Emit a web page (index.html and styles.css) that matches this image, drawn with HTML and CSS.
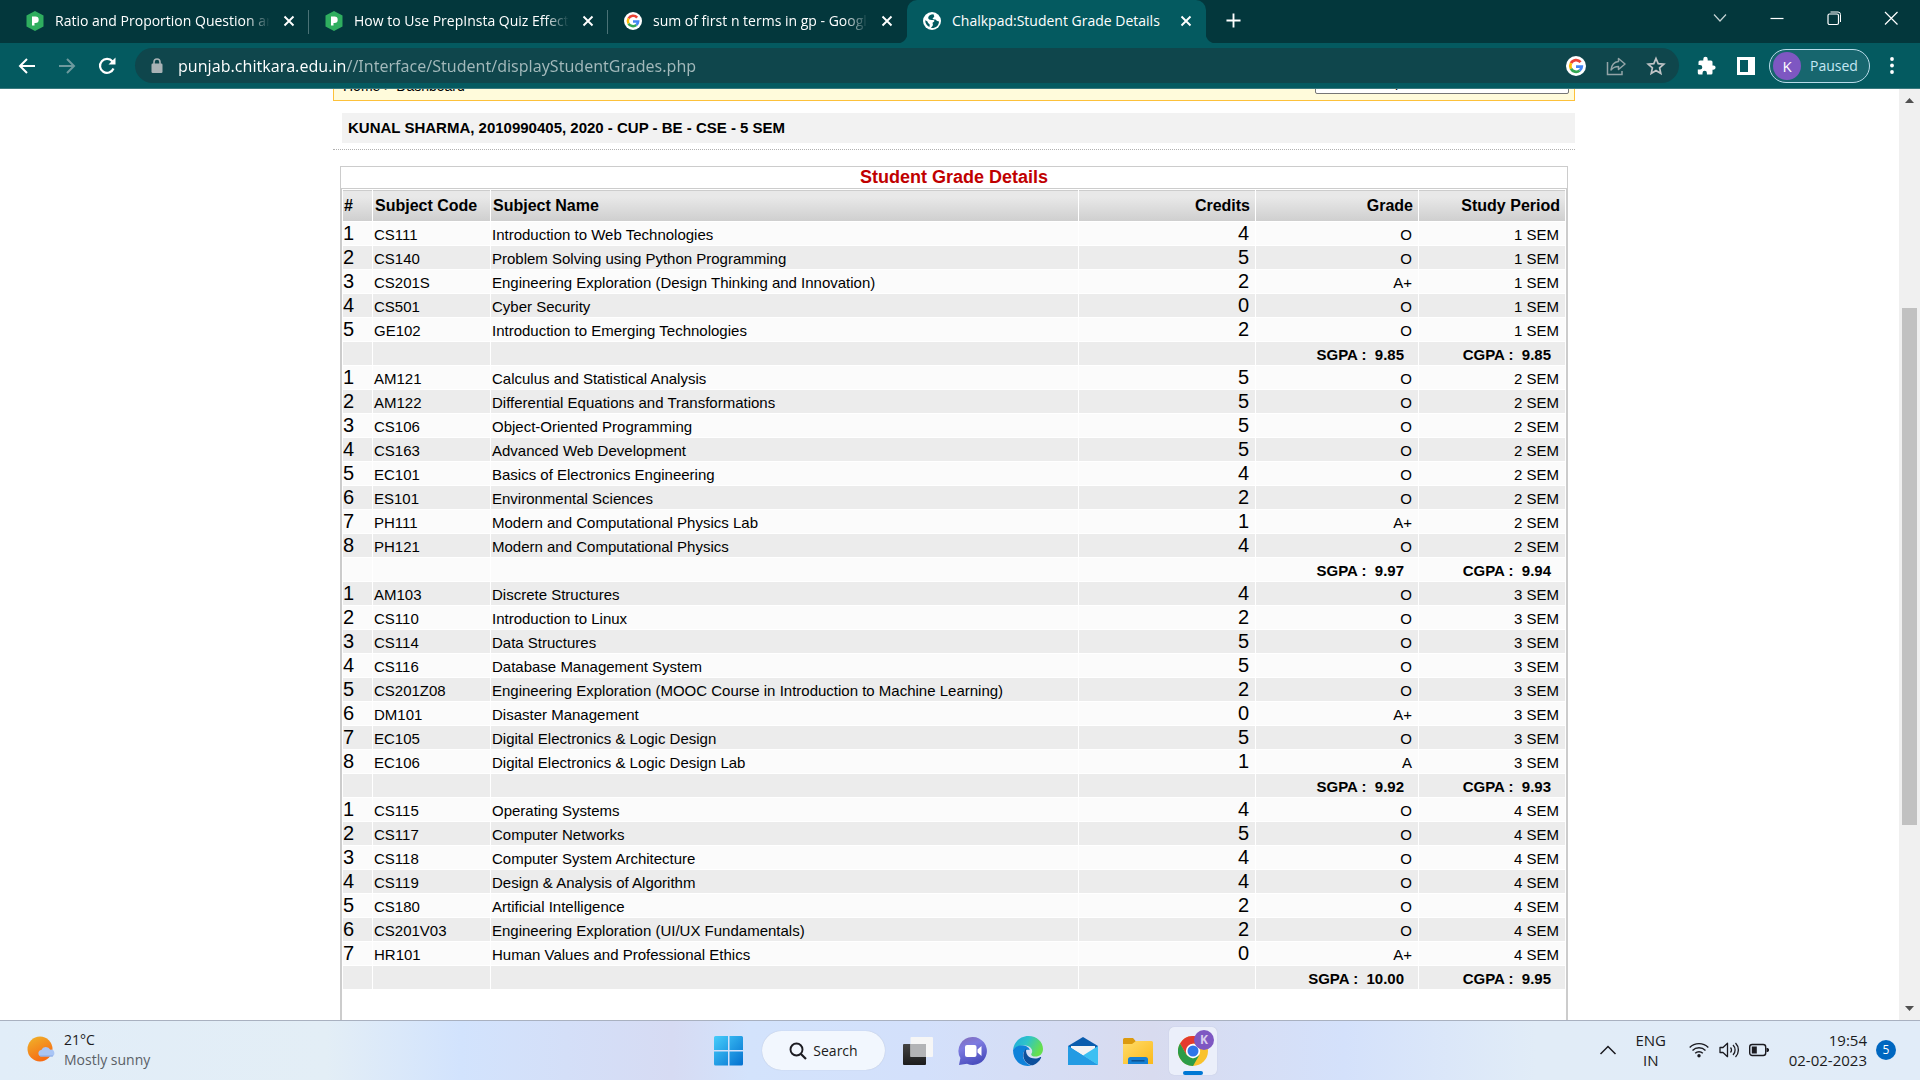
FILE: index.html
```html
<!DOCTYPE html>
<html lang="en">
<head>
<meta charset="utf-8">
<title>Chalkpad:Student Grade Details</title>
<link rel="stylesheet" href="styles.css">
</head>
<body>
<svg class="defs" aria-hidden="true">
  <defs>
    <symbol id="prep" viewBox="0 0 18 20"><path d="M9 0l8.500 4.600v10.800L9 20 .5 15.400V4.600z" fill="#2fae5f"/><path d="M6 5.500h3.500a3.200 3.200 0 0 1 0 6.400H8.500V14.500H6z" fill="#fff"/></symbol>
    <symbol id="goog" viewBox="0 0 20 20"><circle cx="10" cy="10" r="10" fill="#fff"/><g fill="none" stroke-width="2.800"><path d="M14.600 6.200A5.800 5.800 0 0 0 5 7.200" stroke="#ea4335"/><path d="M5 7.200a5.900 5.900 0 0 0 0 5.600" stroke="#fbbc05"/><path d="M5 12.800a5.800 5.800 0 0 0 8.700 1.700" stroke="#34a853"/><path d="M13.700 14.500a5.800 5.800 0 0 0 2-3.900H10" stroke="#4285f4"/></g></symbol>
    <symbol id="x" viewBox="0 0 12 12"><path d="M1.500 1.500l9 9m0-9l-9 9" stroke="#fff" stroke-width="1.900"/></symbol>
  </defs>
</svg>

<header class="browser">
  <nav class="tabs" aria-label="Tabs">
    <div class="tab"><svg class="fav"><use href="#prep"/></svg><a href="#" class="tab-title">Ratio and Proportion Question and Answers</a><button class="close" aria-label="Close tab"><svg><use href="#x"/></svg></button></div>
    <div class="tab"><svg class="fav"><use href="#prep"/></svg><a href="#" class="tab-title">How to Use PrepInsta Quiz Effectively</a><button class="close" aria-label="Close tab"><svg><use href="#x"/></svg></button></div>
    <div class="tab"><svg class="fav"><use href="#goog"/></svg><a href="#" class="tab-title">sum of first n terms in gp - Google Search</a><button class="close" aria-label="Close tab"><svg><use href="#x"/></svg></button></div>
    <div class="tab active"><svg class="fav" viewBox="0 0 18 18"><circle cx="9" cy="9" r="9" fill="#fff"/><path d="M10.500 2.200c-3 .2-5.300 1.600-5.300 3.600 0 1.700 1.500 2.200 3.300 2.200h1.800c1 0 1.400.8.8 1.500-.5.700-1.500.6-1.500 1.500 0 1 .6 1.300.2 2.300-.3.900-1.200 1.700-1.800 2.700 4.500.6 8-2.600 8-6.500l-1.700-.5c-.8-.2-1-1.200-2-1.500-1-.2-2.300.2-2.600-.7-.3-1 1.200-1 1.500-2 .2-.9-.5-1.600-.7-2.600zM2.200 8.300c0 3 1.600 5.500 4.200 6.600l.3-1.900c.1-.8-.6-1.100-1.300-1.700-.8-.7-.5-1.400-1.200-2.100z" fill="#045a60"/></svg><a href="#" class="tab-title">Chalkpad:Student Grade Details</a><button class="close" aria-label="Close tab"><svg><use href="#x"/></svg></button></div>
    <button class="new-tab" aria-label="New tab"><svg viewBox="0 0 16 16"><path d="M8 .5v15M.5 8h15" stroke="#fff" stroke-width="2"/></svg></button>
    <div class="window-controls">
      <button aria-label="Search tabs"><svg viewBox="0 0 16 16"><path d="M2 4.500l6 6.500 6-6.500" fill="none" stroke="#c5d3d4" stroke-width="1.200"/></svg></button>
      <button aria-label="Minimize"><svg viewBox="0 0 16 16"><path d="M1.500 8.500h13" stroke="#fff" stroke-width="1.200"/></svg></button>
      <button aria-label="Restore"><svg viewBox="0 0 16 16"><rect x="2" y="4" width="10.500" height="10.500" rx="1.500" fill="none" stroke="#fff" stroke-width="1.200"/><path d="M4.500 2h7.500a2.500 2.500 0 0 1 2.500 2.500V12" fill="none" stroke="#fff"/></svg></button>
      <button aria-label="Close"><svg viewBox="0 0 16 16"><path d="M2 2l12.500 12.500m0-12.500L2 14.500" stroke="#fff" stroke-width="1.200"/></svg></button>
    </div>
  </nav>
  <div class="toolbar">
    <div class="nav-buttons">
      <button aria-label="Back"><svg viewBox="0 0 20 20"><path d="M18 10H3m7-7l-7 7 7 7" fill="none" stroke="#fff" stroke-width="2"/></svg></button>
      <button aria-label="Forward"><svg viewBox="0 0 20 20"><path d="M2 10h15m-7-7l7 7-7 7" fill="none" stroke="#6d9a9e" stroke-width="2"/></svg></button>
      <button aria-label="Reload"><svg viewBox="0 0 20 20"><path d="M16.500 12.500A7 7 0 1 1 15.500 5.500" fill="none" stroke="#fff" stroke-width="2.200"/><path d="M18.500 1.500v7h-7z" fill="#fff"/></svg></button>
    </div>
    <div class="omnibox">
      <svg class="lock" viewBox="0 0 12 16"><rect y="5.500" x=".5" width="11" height="9.500" rx="1.200" fill="#a9b3b6"/><path d="M3 6V4a3 3 0 0 1 6 0v2" fill="none" stroke="#a9b3b6" stroke-width="1.600"/></svg>
      <input class="url" type="text" aria-label="Address" value="punjab.chitkara.edu.in//Interface/Student/displayStudentGrades.php" spellcheck="false">
      <button aria-label="Google"><svg viewBox="0 0 20 20"><use href="#goog"/></svg></button>
      <button aria-label="Share"><svg viewBox="0 0 20 20"><path d="M1.500 6v12.500H16V15" fill="none" stroke="#93a4a7" stroke-width="1.500"/><path d="M12.500 2.500L19 8l-6.500 5.500V10.500C9.500 10.500 7 11.500 5 14c.5-4.500 3-8 7.500-8.500z" fill="none" stroke="#93a4a7" stroke-width="1.500" stroke-linejoin="round"/></svg></button>
      <button aria-label="Bookmark"><svg viewBox="0 0 20 20"><path d="M10 2.500l2.200 5.200 5.600.5-4.200 3.700 1.200 5.500L10 14.500l-4.800 2.900 1.200-5.500L2.200 8.200l5.600-.5z" fill="none" stroke="#c0c4c6" stroke-width="1.700"/></svg></button>
    </div>
    <div class="actions">
      <button aria-label="Extensions"><svg viewBox="0 0 20 20"><path d="M16.500 9.500V6a1.500 1.500 0 0 0-1.500-1.500h-3.300V3a2.200 2.200 0 0 0-4.400 0v1.500H4A1.500 1.500 0 0 0 2.500 6v3H4a2.300 2.300 0 0 1 0 4.600H1.800V17A1.500 1.500 0 0 0 3.300 18.500h3.200V17a2.200 2.200 0 0 1 4.400 0v1.500H15a1.500 1.500 0 0 0 1.500-1.500v-3.300h1a2.100 2.100 0 0 0 0-4.200z" fill="#fff"/></svg></button>
      <button aria-label="Side panel"><svg viewBox="0 0 20 20"><path d="M1 1h18v18H1zm3 3v12h8V4z" fill="#fff" fill-rule="evenodd"/></svg></button>
      <button class="profile"><span class="avatar">K</span>Paused</button>
      <button class="menu" aria-label="Menu"><svg viewBox="0 0 20 20"><circle cx="10" cy="3" r="1.900" fill="#fff"/><circle cx="10" cy="9.500" r="1.900" fill="#fff"/><circle cx="10" cy="16" r="1.900" fill="#fff"/></svg></button>
    </div>
  </div>
</header>

<div class="viewport">
<main class="page">
  <div class="crumbs">
    <span class="trail"><a href="#">Home</a> &gt; <a href="#">Dashboard</a></span>
    <select aria-label="Group"><option>Select Group</option></select>
  </div>
  <div class="student"><h1>KUNAL SHARMA, 2010990405, 2020 - CUP - BE - CSE - 5 SEM</h1></div>
  <section class="panel">
    <h2>Student Grade Details</h2>
    <div class="panel-body">
    <table class="grades">
      <colgroup><col class="c-num"><col class="c-code"><col class="c-name"><col class="c-credits"><col class="c-grade"><col class="c-period"></colgroup>
      <thead><tr><th>#</th><th>Subject Code</th><th>Subject Name</th><th>Credits</th><th>Grade</th><th>Study Period</th></tr></thead>
      <tbody>
        <tr><td>1</td><td>CS111</td><td>Introduction to Web Technologies</td><td>4</td><td>O</td><td>1 SEM</td></tr>
        <tr><td>2</td><td>CS140</td><td>Problem Solving using Python Programming</td><td>5</td><td>O</td><td>1 SEM</td></tr>
        <tr><td>3</td><td>CS201S</td><td>Engineering Exploration (Design Thinking and Innovation)</td><td>2</td><td>A+</td><td>1 SEM</td></tr>
        <tr><td>4</td><td>CS501</td><td>Cyber Security</td><td>0</td><td>O</td><td>1 SEM</td></tr>
        <tr><td>5</td><td>GE102</td><td>Introduction to Emerging Technologies</td><td>2</td><td>O</td><td>1 SEM</td></tr>
        <tr class="total"><td></td><td></td><td></td><td></td><td>SGPA : &nbsp;9.85</td><td>CGPA : &nbsp;9.85</td></tr>
        <tr><td>1</td><td>AM121</td><td>Calculus and Statistical Analysis</td><td>5</td><td>O</td><td>2 SEM</td></tr>
        <tr><td>2</td><td>AM122</td><td>Differential Equations and Transformations</td><td>5</td><td>O</td><td>2 SEM</td></tr>
        <tr><td>3</td><td>CS106</td><td>Object-Oriented Programming</td><td>5</td><td>O</td><td>2 SEM</td></tr>
        <tr><td>4</td><td>CS163</td><td>Advanced Web Development</td><td>5</td><td>O</td><td>2 SEM</td></tr>
        <tr><td>5</td><td>EC101</td><td>Basics of Electronics Engineering</td><td>4</td><td>O</td><td>2 SEM</td></tr>
        <tr><td>6</td><td>ES101</td><td>Environmental Sciences</td><td>2</td><td>O</td><td>2 SEM</td></tr>
        <tr><td>7</td><td>PH111</td><td>Modern and Computational Physics Lab</td><td>1</td><td>A+</td><td>2 SEM</td></tr>
        <tr><td>8</td><td>PH121</td><td>Modern and Computational Physics</td><td>4</td><td>O</td><td>2 SEM</td></tr>
        <tr class="total"><td></td><td></td><td></td><td></td><td>SGPA : &nbsp;9.97</td><td>CGPA : &nbsp;9.94</td></tr>
        <tr><td>1</td><td>AM103</td><td>Discrete Structures</td><td>4</td><td>O</td><td>3 SEM</td></tr>
        <tr><td>2</td><td>CS110</td><td>Introduction to Linux</td><td>2</td><td>O</td><td>3 SEM</td></tr>
        <tr><td>3</td><td>CS114</td><td>Data Structures</td><td>5</td><td>O</td><td>3 SEM</td></tr>
        <tr><td>4</td><td>CS116</td><td>Database Management System</td><td>5</td><td>O</td><td>3 SEM</td></tr>
        <tr><td>5</td><td>CS201Z08</td><td>Engineering Exploration (MOOC Course in Introduction to Machine Learning)</td><td>2</td><td>O</td><td>3 SEM</td></tr>
        <tr><td>6</td><td>DM101</td><td>Disaster Management</td><td>0</td><td>A+</td><td>3 SEM</td></tr>
        <tr><td>7</td><td>EC105</td><td>Digital Electronics &amp; Logic Design</td><td>5</td><td>O</td><td>3 SEM</td></tr>
        <tr><td>8</td><td>EC106</td><td>Digital Electronics &amp; Logic Design Lab</td><td>1</td><td>A</td><td>3 SEM</td></tr>
        <tr class="total"><td></td><td></td><td></td><td></td><td>SGPA : &nbsp;9.92</td><td>CGPA : &nbsp;9.93</td></tr>
        <tr><td>1</td><td>CS115</td><td>Operating Systems</td><td>4</td><td>O</td><td>4 SEM</td></tr>
        <tr><td>2</td><td>CS117</td><td>Computer Networks</td><td>5</td><td>O</td><td>4 SEM</td></tr>
        <tr><td>3</td><td>CS118</td><td>Computer System Architecture</td><td>4</td><td>O</td><td>4 SEM</td></tr>
        <tr><td>4</td><td>CS119</td><td>Design &amp; Analysis of Algorithm</td><td>4</td><td>O</td><td>4 SEM</td></tr>
        <tr><td>5</td><td>CS180</td><td>Artificial Intelligence</td><td>2</td><td>O</td><td>4 SEM</td></tr>
        <tr><td>6</td><td>CS201V03</td><td>Engineering Exploration (UI/UX Fundamentals)</td><td>2</td><td>O</td><td>4 SEM</td></tr>
        <tr><td>7</td><td>HR101</td><td>Human Values and Professional Ethics</td><td>0</td><td>A+</td><td>4 SEM</td></tr>
        <tr class="total"><td></td><td></td><td></td><td></td><td>SGPA : &nbsp;10.00</td><td>CGPA : &nbsp;9.95</td></tr>
      </tbody>
    </table>
    </div>
  </section>
</main>
<div class="scrollbar" aria-hidden="true">
  <svg viewBox="0 0 9 5"><path d="M4.500 0L9 5H0z" fill="#505050"/></svg>
  <div class="track"><div class="thumb"></div></div>
  <svg viewBox="0 0 9 5"><path d="M0 0h9L4.500 5z" fill="#505050"/></svg>
</div>
</div>

<footer class="taskbar">
  <button class="weather">
    <svg viewBox="0 0 28 28"><defs><linearGradient id="sun" x1="0" y1="0" x2=".5" y2="1"><stop offset="0" stop-color="#efb52b"/><stop offset="1" stop-color="#f76b14"/></linearGradient></defs><circle cx="13" cy="13" r="12.500" fill="url(#sun)"/><path d="M14 20.500a3.300 3.300 0 0 1 .3-6.500 5 5 0 0 1 9-.3A3.400 3.400 0 0 1 24.500 20.500z" fill="#a9c5f5"/><path d="M13 20h13" stroke="#88a9e6"/></svg>
    <span><b>21°C</b><i>Mostly sunny</i></span>
  </button>
  <nav class="apps" aria-label="Taskbar">
    <button aria-label="Start"><svg viewBox="0 0 30 30"><defs><linearGradient id="win" x1="0" y1="0" x2="1" y2="1"><stop offset="0" stop-color="#46cdfb"/><stop offset="1" stop-color="#0370cf"/></linearGradient></defs><path d="M1.500 0H14v14H0V1.500A1.500 1.500 0 0 1 1.500 0zM15.500 0h12A1.500 1.500 0 0 1 29 1.500V14H15.500zM0 15.500h14v14H1.500A1.500 1.500 0 0 1 0 28zM15.500 15.500H29V28a1.500 1.500 0 0 1-1.500 1.500h-12z" fill="url(#win)"/></svg></button>
    <button class="search"><svg viewBox="0 0 18 18"><circle cx="7.500" cy="7.500" r="6" fill="none" stroke="#1c1c22" stroke-width="1.900"/><path d="M12 12l5 5" stroke="#1c1c22" stroke-width="2.200"/></svg>Search</button>
    <button aria-label="Task view"><svg viewBox="0 0 30 30"><defs><linearGradient id="tv" x1="0" y1="0" x2="0" y2="1"><stop offset="0" stop-color="#444"/><stop offset="1" stop-color="#1c1c1c"/></linearGradient></defs><rect y="8" width="23" height="21" rx="1" fill="url(#tv)"/><rect x="7.500" y="1" width="22.500" height="20" rx="1" fill="#f6f6f6"/><path d="M7.500 8H23v13H7.500z" fill="#b3b4b6"/></svg></button>
    <button aria-label="Chat"><svg viewBox="0 0 30 30"><defs><linearGradient id="chat" x1="0" y1="0" x2=".4" y2="1"><stop offset="0" stop-color="#846bb5"/><stop offset=".4" stop-color="#7d7be0"/><stop offset="1" stop-color="#4c4fbf"/></linearGradient></defs><path d="M15 1a14 14 0 1 1-6 26.700L1 29l1.400-7A14 14 0 0 1 15 1z" fill="url(#chat)"/><rect x="7" y="9" width="11.500" height="12" rx="2" fill="#fff"/><path d="M19.500 13.500L23.500 10v10l-4-3.500z" fill="#fff"/></svg></button>
    <button aria-label="Edge"><svg viewBox="0 0 30 30"><defs><linearGradient id="edge" x1="0" y1="0" x2="1" y2=".4"><stop offset="0" stop-color="#1fa8e0"/><stop offset=".5" stop-color="#2fc4c8"/><stop offset="1" stop-color="#66df4e"/></linearGradient></defs><path d="M0 14C1 5 8 0 15.500 0 24 0 30 6 30 13c0 5-3.500 7.500-7.500 7.500-3.500 0-5-1.500-4-3 2-3-.5-7.500-6-8C7 9 2 11 0 14z" fill="url(#edge)"/><path d="M0 14c2-3.500 6-5 10-4.500 4 .4 6.500 2.500 6.700 4.500C10 12 7.500 21 13 26.500 14.500 28 17 29.500 19 29.500 8 32 0 24.500 0 14z" fill="#0f82da"/><path d="M13.500 12.500c-5 4-4 12 2 15.500 2 1.200 3.500 1.500 5 1 3.500-1.500 6-4 7.500-7 .5-1-.3-1.300-1-.8-4 2.500-10 1.300-12.500-2-1.500-2.200-1.800-4.700-1-6.700z" fill="#0c4f9c"/></svg></button>
    <button aria-label="Mail"><svg viewBox="0 0 30 30"><path d="M0 10L15 1l15 9v6H0z" fill="#0a5cad"/><path d="M3 10h24v10H3z" fill="#f3f3f5"/><path d="M0 10l30 19H1.500A1.500 1.500 0 0 1 0 27.500z" fill="#1c92e0"/><path d="M30 10L15 19.500 30 29z" fill="#3cc0f2"/><path d="M0 10l15 9.500L30 29H0z" fill="#239be3"/></svg></button>
    <button aria-label="File Explorer"><svg viewBox="0 0 30 30"><defs><linearGradient id="fold" x1="0" y1="0" x2="1" y2="1"><stop offset="0" stop-color="#ffdc6a"/><stop offset="1" stop-color="#fbb91a"/></linearGradient></defs><path d="M0 3.500A1.500 1.500 0 0 1 1.500 2H10l3 3.500L10 9H0z" fill="#dc9a0e"/><path d="M0 8h9l4-3h15.500A1.500 1.500 0 0 1 30 6.500V28H0z" fill="url(#fold)"/><path d="M5 28v-4.500A2.500 2.500 0 0 1 7.500 21h15a2.500 2.500 0 0 1 2.500 2.500V28z" fill="#1580d4"/><path d="M8.500 24.800h13" stroke="#0b4a87" stroke-width="1.300"/></svg></button>
    <button class="running" aria-label="Chrome"><svg viewBox="0 0 30 30"><circle cx="15" cy="15" r="15" fill="#f9c22b"/><path d="M15 7.500H28A15 15 0 0 0 2 7.500L8.500 18.800z" fill="#e33b2e"/><path d="M2 7.500A15 15 0 0 0 15 30l6.500-11.200-6.500 3.700-6.500-3.700z" fill="#2c9c47"/><circle cx="15" cy="15" r="7.200" fill="#fff"/><circle cx="15" cy="15" r="5.500" fill="#2f75e8"/></svg><span class="app-badge">K</span></button>
  </nav>
  <div class="tray">
    <button aria-label="Show hidden icons"><svg class="caret" viewBox="0 0 18 18"><path d="M1.500 13L9 5.500l7.500 7.500" fill="none" stroke="#1b1b20" stroke-width="1.500"/></svg></button>
    <button class="lang">ENG<br>IN</button>
    <button class="status" aria-label="Network, volume and battery">
      <svg viewBox="0 0 20 20"><g fill="none" stroke="#1b1b20" stroke-width="1.400"><path d="M.7 7.500a13 13 0 0 1 18.600 0"/><path d="M3.500 10.500a9.200 9.200 0 0 1 13 0"/><path d="M6.200 13.300a5.400 5.400 0 0 1 7.600 0"/></g><circle cx="10" cy="15.800" r="1.700" fill="#1b1b20"/></svg>
      <svg viewBox="0 0 20 20"><g fill="none" stroke="#1b1b20" stroke-width="1.300"><path d="M1 7.500h3l4.500-4.200v13.400L4 12.500H1z" stroke-linejoin="round"/><path d="M11.500 7.500a4 4 0 0 1 0 5M14 5a7 7 0 0 1 0 10M16.500 3a10 10 0 0 1 0 14"/></g></svg>
      <svg viewBox="0 0 20 20"><rect x=".7" y="4.500" width="16" height="11" rx="2.500" fill="none" stroke="#1b1b20" stroke-width="1.400"/><rect x="2.800" y="6.500" width="5" height="7" fill="#1b1b20"/><path d="M17.500 8h1.200l1.300 1v2l-1.300 1h-1.200z" fill="#1b1b20"/></svg>
    </button>
    <button class="clock">19:54<br>02-02-2023</button>
    <button class="count">5</button>
  </div>
</footer>
</body>
</html>
```
FILE: styles.css
```css
* { box-sizing: border-box; }
body {
  margin: 0;
  height: 100vh;
  display: grid;
  grid-template-rows: auto 1fr auto;
  overflow: hidden;
  background: #fff;
  font-family: "Liberation Sans", Arial, sans-serif;
  color: #000;
}
button {
  margin: 0;
  padding: 0;
  border: 0;
  background: none;
  color: inherit;
  font: inherit;
  display: flex;
  align-items: center;
  justify-content: center;
}
a { color: inherit; text-decoration: none; }
.defs { position: absolute; width: 0; height: 0; }

/* Browser chrome */
.browser { font-family: "Open Sans", "Noto Sans", sans-serif; color: #fff; border-bottom: 1px solid #3a797e; }
.tabs { display: flex; height: 43px; padding-left: 10px; background: #03373c; }
.tab {
  flex: 0 1 299px;
  min-width: 0;
  display: flex;
  align-items: center;
  gap: 11px;
  padding: 0 12px 2px 16px;
  position: relative;
}
.tab:not(.active)::after { content: ""; position: absolute; right: 0; top: 10px; width: 1px; height: 24px; background: #4a7276; }
.tab:nth-child(3)::after { display: none; }
.tab.active { background: #045a60; border-radius: 10px 10px 0 0; }
.tab.active::before, .tab.active::after {
  content: ""; position: absolute; bottom: 0; width: 10px; height: 10px;
}
.tab.active::before { left: -10px; background: radial-gradient(circle at 0 0, #03373c 10px, #045a60 11px); }
.tab.active::after { right: -10px; background: radial-gradient(circle at 100% 0, #03373c 10px, #045a60 11px); }
.fav { width: 18px; height: 20px; flex: none; }
.tab-title {
  flex: 1;
  min-width: 0;
  overflow: hidden;
  white-space: nowrap;
  font-size: 14px;
  line-height: 24px;
  -webkit-mask-image: linear-gradient(to left, transparent, #000 24px);
  mask-image: linear-gradient(to left, transparent, #000 24px);
}
.tab.active .tab-title { -webkit-mask-image: none; mask-image: none; }
.close { width: 16px; height: 16px; flex: none; }
.close svg { width: 12px; height: 12px; }
.new-tab { width: 54px; padding-bottom: 2px; }
.new-tab svg { width: 15px; height: 15px; }
.window-controls { margin-left: auto; padding-right: 1px; display: flex; height: 36px; }
.window-controls button { width: 57px; }
.window-controls svg { width: 16px; height: 16px; }

.toolbar { display: flex; align-items: center; height: 45px; background: #045a60; }
.nav-buttons { display: flex; flex: none; width: 135px; padding-left: 7px; }
.nav-buttons button { width: 40px; height: 36px; }
.nav-buttons svg { width: 20px; height: 20px; }
.omnibox {
  flex: 1;
  display: flex;
  align-items: center;
  height: 35px;
  padding: 0 3px 0 16px;
  border-radius: 18px;
  background: #0f464c;
}
.lock { width: 12px; height: 16px; flex: none; }
.url {
  flex: 1;
  min-width: 0;
  height: 30px;
  margin-left: 15px;
  padding: 0;
  border: 0;
  outline: 0;
  font: 16px "Noto Sans", "Open Sans", sans-serif;
  color: transparent;
  background: linear-gradient(to right, #fff 168px, #a3b9bb 168px);
  -webkit-background-clip: text;
  background-clip: text;
}
.omnibox button { width: 40px; height: 30px; }
.omnibox button svg, .actions svg { width: 20px; height: 20px; }
.actions { display: flex; align-items: center; padding: 0 8px 0 7px; }
.actions button { width: 40px; height: 34px; }
.actions .profile {
  width: 101px;
  margin: 0 2px 0 3px;
  padding-left: 3px;
  gap: 9px;
  justify-content: flex-start;
  border: 1px solid #b9dbe9;
  border-radius: 17px;
  background: #17666e;
  color: #c4e7f3;
  font-size: 14px;
}
.avatar { width: 28px; height: 28px; border-radius: 50%; background: #7e57c2; color: #fff; font-size: 15px; line-height: 28px; }

/* Web page, scrolled past the top of its breadcrumb bar */
.viewport { min-height: 0; display: flex; padding-left: 9px; overflow: hidden; }
.page { flex: 1; display: flex; flex-direction: column; max-width: 1242px; margin: -29px auto 0; }
.crumbs {
  flex: none;
  display: flex;
  align-items: center;
  justify-content: space-between;
  height: 41px;
  padding: 3px 5px 0 9px;
  border: 1px solid #fdc13a;
  background: #fffbdb;
  font-size: 14px;
}
.trail { padding-top: 8px; }
.crumbs select {
  width: 254px;
  height: 24px;
  padding: 0 5px;
  appearance: none;
  border: 1px solid #767676;
  border-radius: 2px;
  background: #fff;
  font: 14px "Liberation Sans", Arial, sans-serif;
}
.student {
  flex: none;
  padding: 12px 0 6px 9px;
  border-bottom: 1px dotted #b0b0b0;
}
.student h1 {
  margin: 0;
  padding-left: 6px;
  background: #f2f2f2;
  font-size: 15px;
  line-height: 30px;
}
.panel { flex: none; margin: 16px 7px 0; border: 1px solid #ccc; }
.panel h2 { margin: 0; font-size: 18px; line-height: 21px; text-align: center; color: #c00000; }
.panel-body { border: 1px solid #ccc; padding-bottom: 60px; }
.grades { width: 100%; table-layout: fixed; border-spacing: 1px; }
.c-num { width: 29px; }
.c-code { width: 117px; }
.c-credits { width: 176px; }
.c-grade { width: 162px; }
.c-period { width: 146px; }
.grades th {
  height: 31px;
  padding: 0 5px 0 2px;
  background: linear-gradient(#e8e8e8 20%, #cfcfcf);
  border-top: 1px solid #ccc;
  font-size: 16px;
  text-align: left;
}
.grades th:first-child { padding-left: 1px; }
.grades td { height: 23px; padding: 3px 6px 0 1px; font-size: 15px; line-height: 19px; white-space: nowrap; vertical-align: top; }
.grades tr:nth-child(odd) td { background: #fbfbfb; }
.grades tr:nth-child(even) td { background: #ececec; }
.grades td:nth-child(1), .grades td:nth-child(4) { padding-top: 0; font-size: 20px; line-height: 22px; }
.grades td:nth-child(1) { padding-left: 0; }
.grades th:nth-child(n+4), .grades td:nth-child(n+4) { text-align: right; }
.grades .total td { font-weight: bold; padding-right: 14px; }

.scrollbar {
  flex: none;
  width: 21px;
  padding: 9px 3px;
  display: flex;
  flex-direction: column;
  align-items: center;
  background: #f0f0f0;
}
.scrollbar svg { width: 9px; height: 5px; }
.track { flex: 1; align-self: stretch; padding-top: 205px; }
.thumb { height: 517px; background: #c1c1c1; }

/* Taskbar */
.taskbar {
  display: grid;
  grid-template-columns: 1fr auto 1fr;
  align-items: center;
  height: 60px;
  border-top: 1px solid #a9b1c0;
  background: linear-gradient(to right, #e1edf8 0%, #e3eef6 17%, #d2e3fd 24%, #d6dbf3 35%, #d3e3fc 39%, #d3e0fb 48%, #d8dbef 60%, #d4e1fb 70%, #e1ecf7 80%, #e1ecf8 100%);
  font: 15px/20px "Open Sans", "Noto Sans", sans-serif;
  color: #1b1b20;
}
.weather { justify-self: start; gap: 9px; padding: 0 0 2px 27px; text-align: left; }
.weather svg { width: 28px; height: 28px; }
.weather b, .weather i { display: block; font-weight: normal; font-style: normal; font-size: 14px; }
.weather i { color: #5a6066; }
.apps { display: flex; align-items: center; gap: 7px; padding-left: 2px; }
.apps button { width: 48px; height: 48px; position: relative; }
.apps svg { width: 30px; height: 30px; }
.apps .search {
  width: 123px;
  height: 39px;
  margin: 0 2px;
  gap: 6px;
  border-radius: 20px;
  background: #f2f7fe;
  box-shadow: 0 0 1px #a9b4cc;
  font-size: 14px;
}
.apps .search svg { width: 18px; height: 18px; }
.apps .running { background: #ebeffa; border-radius: 5px; box-shadow: 0 0 1px #b0b8d0; }
.running::after { content: ""; position: absolute; left: 14px; bottom: 0; width: 20px; height: 4px; border-radius: 2px; background: #0078d4; }
.app-badge {
  position: absolute;
  right: 3px;
  top: 3px;
  width: 20px;
  height: 20px;
  border-radius: 50%;
  background: #7e57c2;
  color: #d9cdee;
  font-size: 12px;
  font-weight: bold;
}
.tray { justify-self: end; display: flex; align-items: center; padding: 0 24px 2px 0; }
.caret { width: 18px; height: 18px; }
.lang { width: 68px; text-align: center; }
.status { gap: 10px; margin-right: 20px; margin-left: 4px; }
.status svg { width: 20px; height: 20px; }
.clock { justify-content: flex-end; text-align: right; min-width: 78px; }
.count { width: 20px; height: 20px; margin-left: 9px; border-radius: 50%; background: #0067c0; color: #fff; font-size: 12px; }
```
